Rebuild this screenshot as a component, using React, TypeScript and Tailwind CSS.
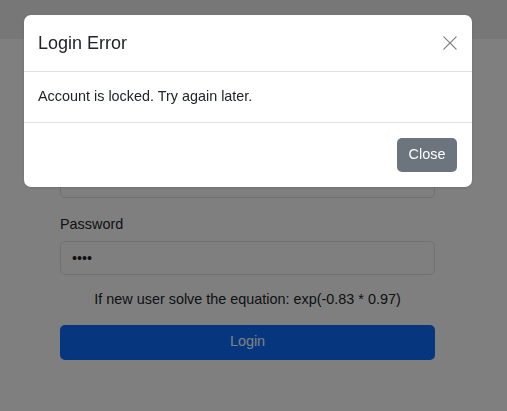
export default function App() {
  return (
    <div className="relative min-h-[411px] bg-white text-[#212529] font-['Liberation_Sans',Arial,sans-serif]">
      <header className="h-[39px] bg-[#efefef]" />

      <form className="ml-[60px] w-[375px] pt-[96px]" onSubmit={(e) => e.preventDefault()}>
        <label className="block text-[14.4px] leading-[21.6px] mb-[7px]">Username</label>
        <input
          type="text"
          className="block w-full h-[34px] px-[11px] rounded-[5px] border border-[#dee2e6] text-[14.4px] outline-none"
        />

        <label className="block mt-[16px] text-[14.4px] leading-[21.6px] mb-[6px]">Password</label>
        <input
          type="password"
          defaultValue="1234"
          className="block w-full h-[34px] px-[11px] rounded-[5px] border border-[#dee2e6] text-[14.4px] outline-none"
        />

        <p className="mt-[14px] text-center text-[14.4px] leading-[21.6px]">
          If new user solve the equation: exp(-0.83 * 0.97)
        </p>

        <button
          type="submit"
          className="mt-[14px] w-full h-[35px] rounded-[5px] bg-[#0d6efd] text-white text-[14.4px]"
        >
          Login
        </button>
      </form>

      <div className="fixed inset-0 bg-[rgba(0,0,0,0.5)]" />

      <div className="absolute left-[24px] top-[15px] w-[448px] rounded-[7px] bg-white shadow-sm">
        <div className="flex h-[57px] items-center justify-between border-b border-[#dee2e6] pl-[14px] pr-[15px]">
          <h5 className="text-[18px] leading-[27px] text-[#212529]">Login Error</h5>
          <button type="button" aria-label="Close" className="flex h-[14px] w-[14px] items-center justify-center">
            <svg viewBox="0 0 16 16" className="h-[14px] w-[14px]" fill="none" stroke="#7d7d7d" strokeWidth="1.4" strokeLinecap="round">
              <path d="M1 1 15 15M15 1 1 15" />
            </svg>
          </button>
        </div>

        <div className="flex h-[51px] items-center border-b border-[#dee2e6] px-[14px]">
          <p className="text-[14.4px] leading-[21.6px]">Account is locked. Try again later.</p>
        </div>

        <div className="flex h-[64px] items-center justify-end pr-[15px]">
          <button type="button" className="h-[34px] w-[60px] rounded-[5px] bg-[#6c757d] text-[14.4px] text-white">
            Close
          </button>
        </div>
      </div>
    </div>
  );
}
